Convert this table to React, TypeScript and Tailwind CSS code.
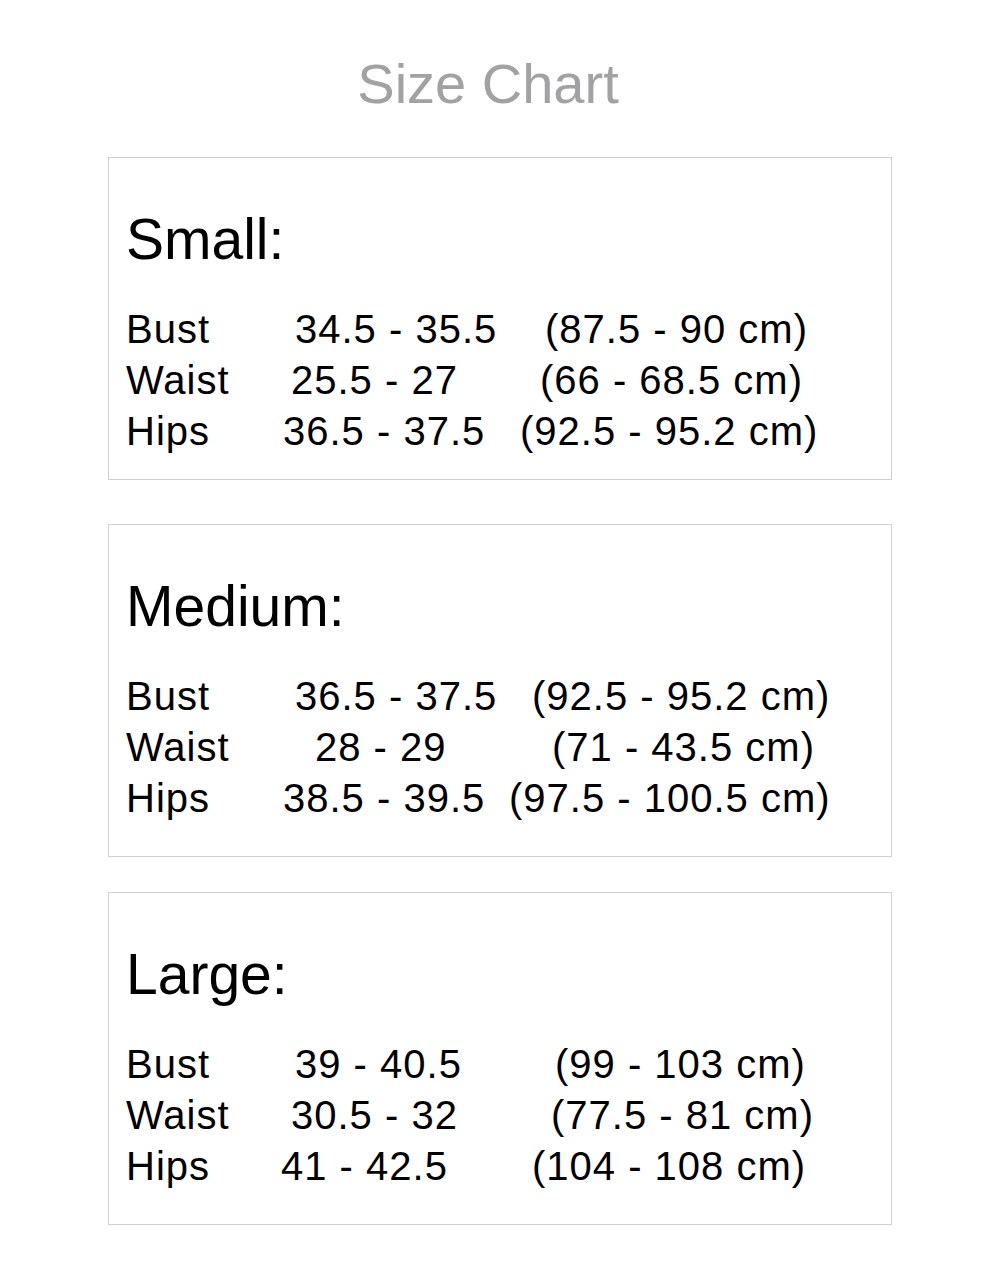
import React from "react";

type Row = { label: string; value: string; cm: string; lw: string; vw: string };
type Size = { name: string; rows: Row[]; box: string };

const sizes: Size[] = [
  {
    name: "Small:",
    box: "pt-[53px] pb-[22px]",
    rows: [
      { label: "Bust", value: "34.5 - 35.5", cm: "(87.5 - 90 cm)", lw: "w-[169px]", vw: "w-[250px]" },
      { label: "Waist", value: "25.5 - 27", cm: "(66 - 68.5 cm)", lw: "w-[165px]", vw: "w-[249px]" },
      { label: "Hips", value: "36.5 - 37.5", cm: "(92.5 - 95.2 cm)", lw: "w-[157px]", vw: "w-[237px]" },
    ],
  },
  {
    name: "Medium:",
    box: "pt-[53px] pb-[32px]",
    rows: [
      { label: "Bust", value: "36.5 - 37.5", cm: "(92.5 - 95.2 cm)", lw: "w-[169px]", vw: "w-[237px]" },
      { label: "Waist", value: "28 - 29", cm: "(71 - 43.5 cm)", lw: "w-[189px]", vw: "w-[237px]" },
      { label: "Hips", value: "38.5 - 39.5", cm: "(97.5 - 100.5 cm)", lw: "w-[157px]", vw: "w-[226px]" },
    ],
  },
  {
    name: "Large:",
    box: "pt-[53px] pb-[32px]",
    rows: [
      { label: "Bust", value: "39 - 40.5", cm: "(99 - 103 cm)", lw: "w-[169px]", vw: "w-[260px]" },
      { label: "Waist", value: "30.5 - 32", cm: "(77.5 - 81 cm)", lw: "w-[165px]", vw: "w-[260px]" },
      { label: "Hips", value: "41 - 42.5", cm: "(104 - 108 cm)", lw: "w-[155px]", vw: "w-[251px]" },
    ],
  },
];

const gaps = ["mt-[45px]", "mt-[44px]", "mt-[35px]"];

export default function App() {
  return (
    <div className="w-[1000px] h-[1277px] bg-white font-['Liberation_Sans',Arial,sans-serif] text-black">
      <div className="pt-[56px] pr-[24px] text-center text-[56px] leading-[56px] text-[#a2a2a4]">
        Size Chart
      </div>
      {sizes.map((s, i) => (
        <div
          key={s.name}
          className={`${gaps[i]} mx-auto w-[784px] border border-[#cfcfcf] pl-[17px] ${s.box}`}
        >
          <div className="text-[57px] leading-[57px]">{s.name}</div>
          <div className="mt-[36px] flex flex-col">
            {s.rows.map((r) => (
              <div key={r.label} className="flex text-[40px] leading-[51px] tracking-[1px] whitespace-nowrap">
                <span className={r.lw}>{r.label}</span>
                <span className={r.vw}>{r.value}</span>
                <span>{r.cm}</span>
              </div>
            ))}
          </div>
        </div>
      ))}
    </div>
  );
}
